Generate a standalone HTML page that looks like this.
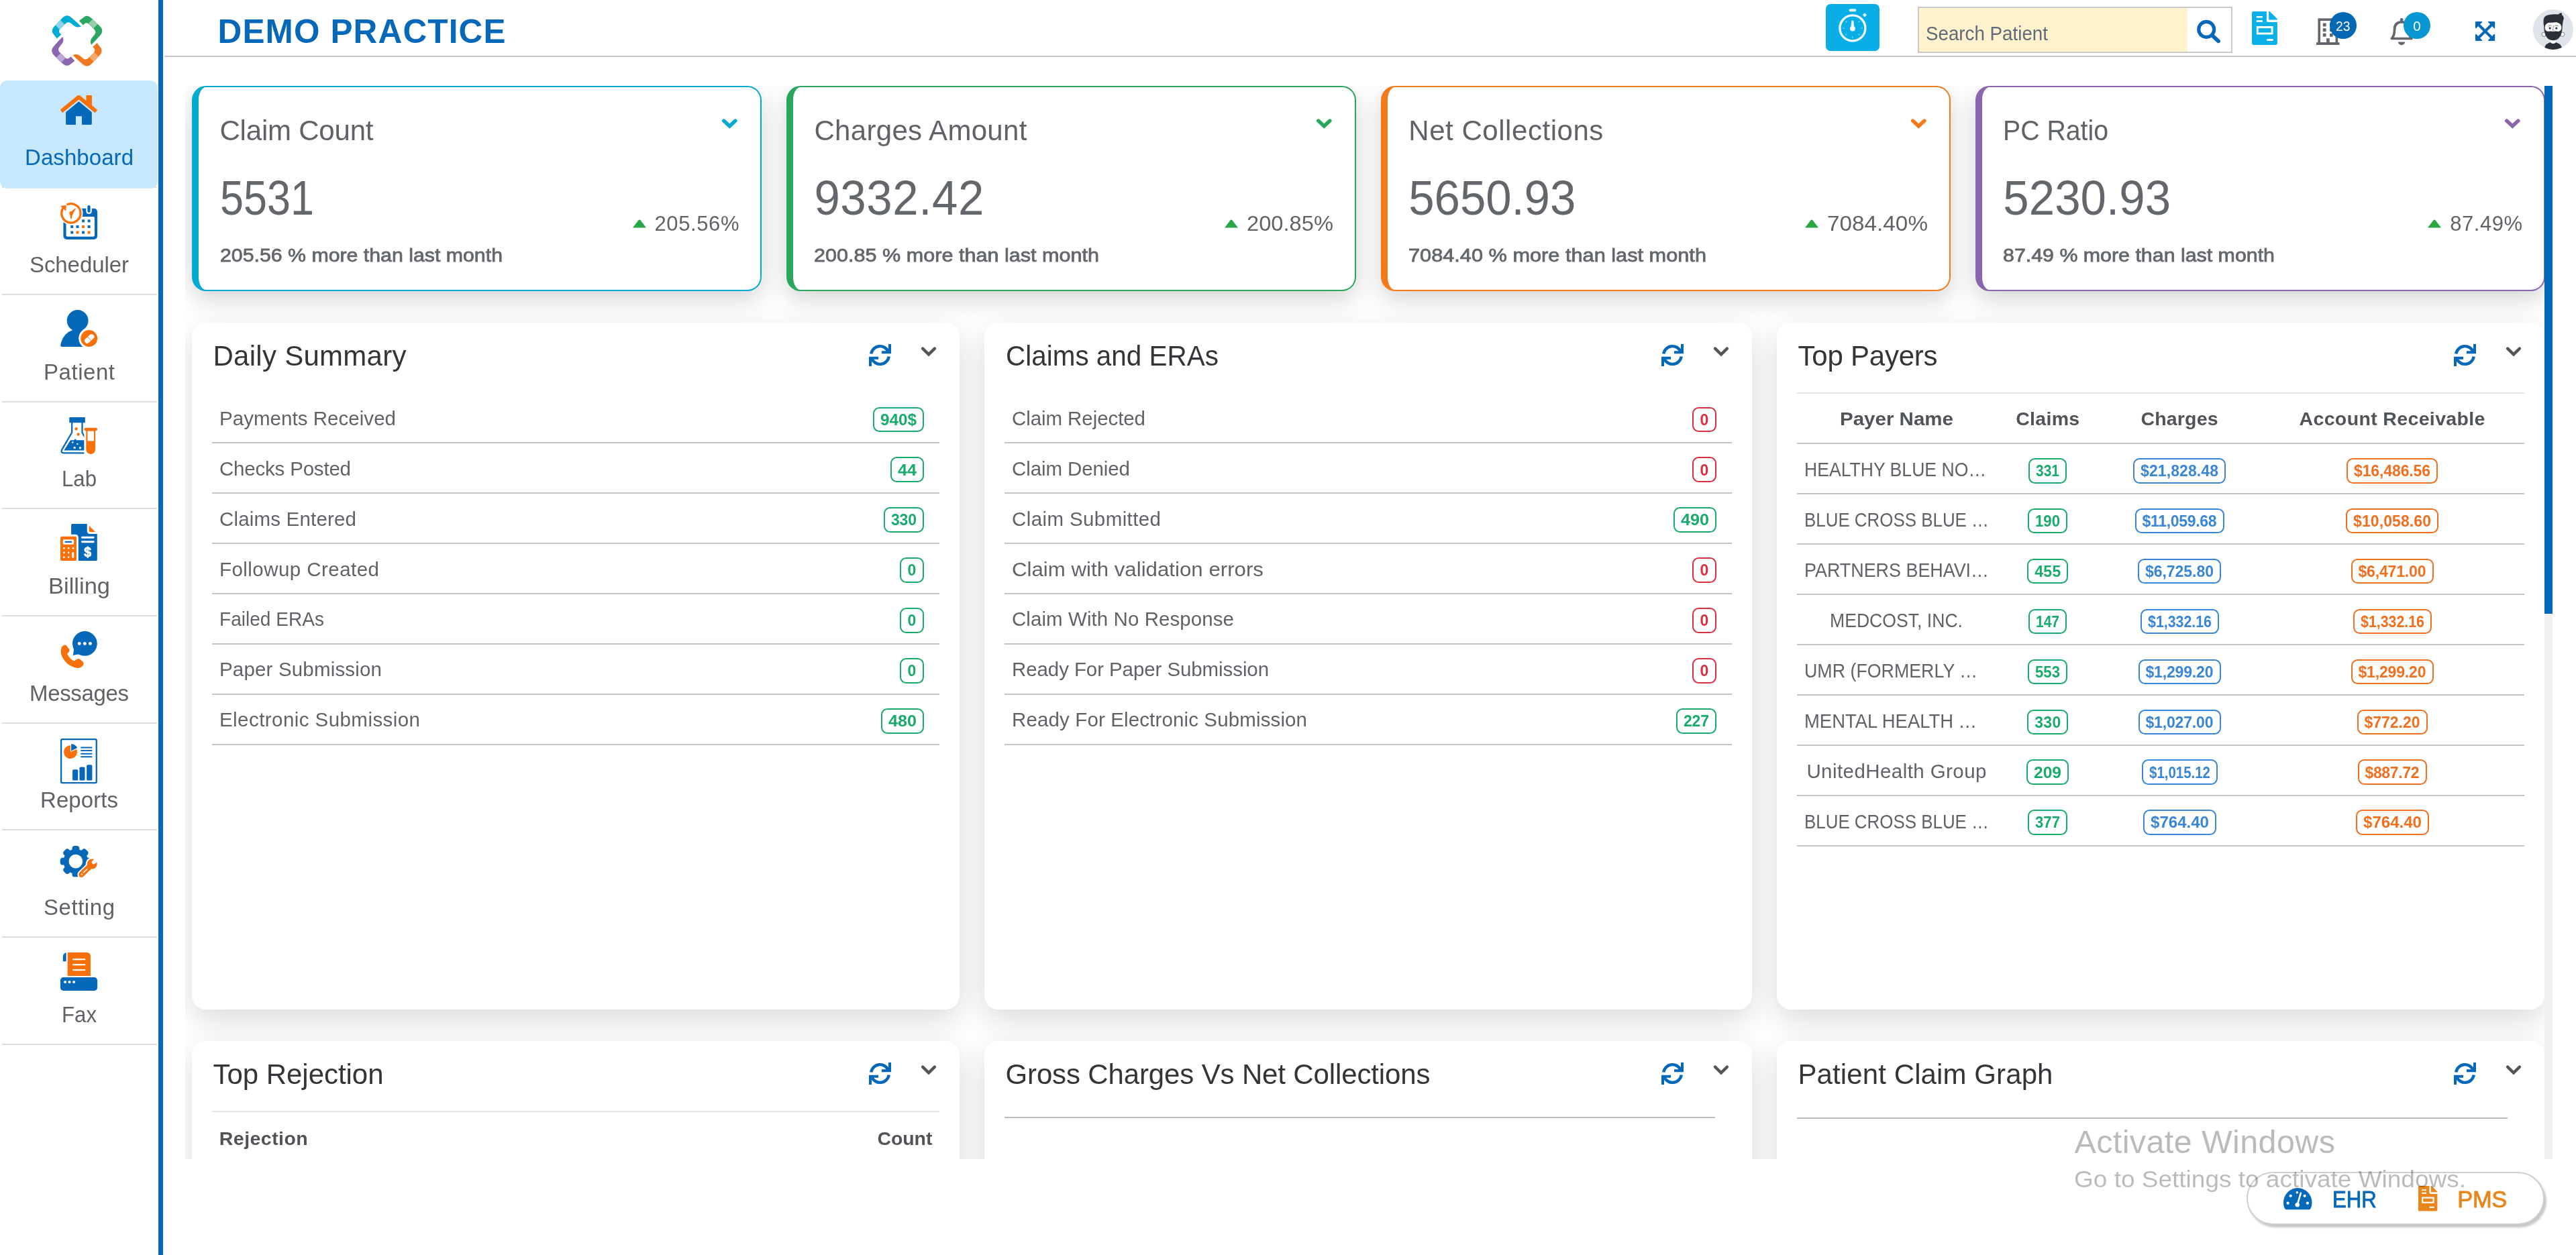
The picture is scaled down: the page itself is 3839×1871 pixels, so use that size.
<!DOCTYPE html>
<html lang="en"><head><meta charset="utf-8"><title>DEMO PRACTICE - Dashboard</title>
<style>
html,body{margin:0;padding:0;background:#fff;}
body{width:3839px;height:1871px;position:relative;overflow:hidden;font-family:"Liberation Sans",sans-serif;}
.t{position:absolute;white-space:nowrap;line-height:1;}
#root{position:absolute;left:0;top:0;width:3839px;height:1871px;will-change:transform;}
svg{display:block;width:100%;height:100%;overflow:visible}
</style></head><body><div id="root">
<div style="position:absolute;left:0.0px;top:0.0px;width:236.0px;height:1871.0px;background:#fff;"></div>
<div style="position:absolute;left:236.0px;top:0.0px;width:7.0px;height:1871.0px;background:#0568b8;"></div>
<div style="position:absolute;left:77px;top:22.5px;width:75.5px;height:75.5px"><svg viewBox="215 155 945 950"><g transform="rotate(0 687 631)"><path d="M312 590 L245 505 Q187 440 270 350 L400 215 Q490 111 585 195 L700 300 L765 362 Q690 395 630 350 L570 300 Q520 265 475 305 L370 410 Q335 450 365 487 L392 515 Z" fill="#00acd4"/><path d="M280 335 L373.5 241.5 L453.5 321.5 L360 415 Z" fill="#8fd3ea"/></g><g transform="rotate(90 687 631)"><path d="M312 590 L245 505 Q187 440 270 350 L400 215 Q490 111 585 195 L700 300 L765 362 Q690 395 630 350 L570 300 Q520 265 475 305 L370 410 Q335 450 365 487 L392 515 Z" fill="#2ba560"/><path d="M280 335 L373.5 241.5 L453.5 321.5 L360 415 Z" fill="#98cfa8"/></g><g transform="rotate(180 687 631)"><path d="M312 590 L245 505 Q187 440 270 350 L400 215 Q490 111 585 195 L700 300 L765 362 Q690 395 630 350 L570 300 Q520 265 475 305 L370 410 Q335 450 365 487 L392 515 Z" fill="#f07820"/><path d="M280 335 L373.5 241.5 L453.5 321.5 L360 415 Z" fill="#f8a868"/></g><g transform="rotate(270 687 631)"><path d="M312 590 L245 505 Q187 440 270 350 L400 215 Q490 111 585 195 L700 300 L765 362 Q690 395 630 350 L570 300 Q520 265 475 305 L370 410 Q335 450 365 487 L392 515 Z" fill="#8a65b0"/><path d="M280 335 L373.5 241.5 L453.5 321.5 L360 415 Z" fill="#bba8d4"/></g></svg></div>
<div style="position:absolute;left:3.0px;top:278.3px;width:231.0px;height:2.0px;background:#dcdcdc;"></div>
<div style="position:absolute;left:0.0px;top:120.0px;width:235.0px;height:161.0px;background:#c8e8fe;border-radius:11px;"></div>
<div style="position:absolute;left:90px;top:141.8px;width:55.2px;height:44.2px"><svg viewBox="215 212 990 793" preserveAspectRatio="none"><path d="M708 215 Q686 208 660 228 L222 590 Q208 605 222 622 L258 668 Q270 682 288 670 L708 327 L1128 672 Q1142 682 1154 668 L1198 622 Q1208 608 1195 597 L1058 482 L1058 232 Q1058 214 1040 214 L922 214 Q905 214 905 232 L905 357 L752 228 Q730 208 708 215 Z" fill="#f8700a"/><path d="M708 380 L1040 652 Q1055 665 1055 685 L1055 975 Q1055 1003 1027 1003 L790 1003 L790 772 L627 772 L627 1003 L388 1003 Q360 1003 360 975 L360 685 Q360 665 375 652 Z" fill="#0568b8"/></svg></div>
<div class="t" style="left:37.0px;top:218.4px;font-size:33px;color:#0568b8;letter-spacing:0.07px;">Dashboard</div>
<div style="position:absolute;left:3.0px;top:438.0px;width:231.0px;height:2.0px;background:#dcdcdc;"></div>
<div style="position:absolute;left:89.8px;top:302px;width:55.1px;height:54.9px"><svg viewBox="200 170 935 930" preserveAspectRatio="none"><path fill-rule="evenodd" fill="#0568b8" d="M370 320 H1040 Q1135 320 1135 415 V1005 Q1135 1100 1040 1100 H370 Q275 1100 275 1005 V415 Q275 320 370 320 Z M380 525 Q345 525 345 560 V995 Q345 1030 380 1030 H1030 Q1065 1030 1065 995 V560 Q1065 525 1030 525 Z"/><path d="M850 300 V380 Q850 455 922 455 Q995 455 995 380 V300 Z" fill="#fff"/><rect x="885" y="238" width="72" height="185" rx="36" fill="#0568b8"/><circle cx="470" cy="440" r="298" fill="#fff"/><rect x="745" y="600" width="66" height="68" fill="#0568b8"/><rect x="890" y="600" width="66" height="68" fill="#0568b8"/><rect x="460" y="745" width="66" height="68" fill="#0568b8"/><rect x="600" y="745" width="66" height="68" fill="#0568b8"/><rect x="745" y="745" width="66" height="68" fill="#f8700a"/><rect x="890" y="745" width="66" height="68" fill="#0568b8"/><rect x="460" y="890" width="66" height="68" fill="#0568b8"/><rect x="600" y="890" width="66" height="68" fill="#f8700a"/><rect x="745" y="890" width="66" height="68" fill="#0568b8"/><rect x="890" y="890" width="66" height="68" fill="#f8700a"/><path d="M361 226 A240 240 0 1 1 273.4 302.3" fill="none" stroke="#f8700a" stroke-width="56"/><path d="M200 256 L350 236 L340 384 Z" fill="#f8700a"/><circle cx="475" cy="440" r="48" fill="#f8700a"/><path d="M450 415 L575 315 L590 328 L505 470 Z M440 450 L505 460 L486 575 L458 575 Z" fill="#f8700a"/></svg></div>
<div class="t" style="left:44.0px;top:378.1px;font-size:33px;color:#5f6368;letter-spacing:-0.08px;">Scheduler</div>
<div style="position:absolute;left:3.0px;top:597.6px;width:231.0px;height:2.0px;background:#dcdcdc;"></div>
<div style="position:absolute;left:89.8px;top:462px;width:55.1px;height:54.9px"><svg viewBox="200 170 935 930" preserveAspectRatio="none"><circle cx="635" cy="440" r="270" fill="#0568b8"/><path d="M240 1100 Q195 1100 207 1040 Q270 760 520 675 L780 675 L900 1100 Z" fill="#0568b8"/><circle cx="925" cy="890" r="262" fill="#fff"/><circle cx="925" cy="890" r="212" fill="#f8700a"/><g transform="rotate(-42 935 897)"><rect x="795" y="832" width="280" height="130" rx="65" fill="#fff"/><rect x="930" y="832" width="10" height="130" fill="#f8700a"/></g></svg></div>
<div class="t" style="left:65.0px;top:537.8px;font-size:33px;color:#5f6368;letter-spacing:0.54px;">Patient</div>
<div style="position:absolute;left:3.0px;top:757.3px;width:231.0px;height:2.0px;background:#dcdcdc;"></div>
<div style="position:absolute;left:89.8px;top:622px;width:55.1px;height:54.9px"><svg viewBox="200 170 935 930" preserveAspectRatio="none"><rect x="425" y="172" width="400" height="138" rx="16" fill="#0568b8"/><path d="M492 300 V555 L238 990 Q200 1075 290 1076 H900" fill="none" stroke="#0568b8" stroke-width="38" stroke-linejoin="round"/><path d="M752 300 V560 L830 700" fill="none" stroke="#0568b8" stroke-width="38"/><path d="M455 750 H545 Q575 690 610 750 H810 V1010 H290 Z" fill="#0568b8"/><circle cx="510" cy="805" r="20" fill="#fff"/><circle cx="630" cy="845" r="20" fill="#fff"/><circle cx="560" cy="940" r="28" fill="#fff"/><circle cx="700" cy="945" r="28" fill="#fff"/><circle cx="600" cy="462" r="38" fill="#f8700a"/><circle cx="652" cy="603" r="38" fill="#f8700a"/><rect x="800" y="400" width="340" height="710" fill="#fff"/><rect x="800" y="435" width="335" height="76" rx="38" fill="#f8700a"/><path d="M850 500 H1085 V983 A117.5 117.5 0 0 1 850 983 Z" fill="#f8700a"/><rect x="888" y="520" width="160" height="250" fill="#fff"/></svg></div>
<div class="t" style="left:92.0px;top:697.4px;font-size:33px;color:#5f6368;transform:scaleX(0.9444);transform-origin:0 0;">Lab</div>
<div style="position:absolute;left:3.0px;top:917.0px;width:231.0px;height:2.0px;background:#dcdcdc;"></div>
<div style="position:absolute;left:90.1px;top:781px;width:54.8px;height:55px"><svg viewBox="205 152 930 933" preserveAspectRatio="none"><path d="M505 152 H880 V330 Q880 405 955 405 H1135 V1060 Q1135 1085 1110 1085 H660 V500 Q660 420 580 420 H478 V180 Q478 152 505 152 Z" fill="#0568b8"/><path d="M930 200 L1090 355 H960 Q930 355 930 325 Z" fill="#f8700a"/><rect x="730" y="470" width="335" height="50" rx="25" fill="#fff"/><rect x="730" y="580" width="335" height="50" rx="25" fill="#fff"/><text x="895" y="985" font-family="Liberation Sans, sans-serif" font-weight="700" font-size="330" text-anchor="middle" fill="#fff" stroke="#fff" stroke-width="14">$</text><rect x="205" y="470" width="407" height="615" rx="32" fill="#f8700a"/><rect x="270" y="545" width="275" height="130" rx="30" fill="#fff"/><rect x="320" y="590" width="175" height="36" fill="#0568b8"/><circle cx="297" cy="768" r="23" fill="#fff"/><circle cx="412" cy="768" r="23" fill="#fff"/><circle cx="527" cy="768" r="23" fill="#fff"/><circle cx="297" cy="880" r="23" fill="#fff"/><circle cx="412" cy="880" r="23" fill="#fff"/><circle cx="297" cy="995" r="23" fill="#fff"/><circle cx="412" cy="995" r="23" fill="#fff"/><rect x="497" y="865" width="52" height="150" rx="26" fill="#fff"/></svg></div>
<div class="t" style="left:72.0px;top:857.1px;font-size:33px;color:#5f6368;transform:scaleX(1.0449);transform-origin:0 0;">Billing</div>
<div style="position:absolute;left:3.0px;top:1076.6px;width:231.0px;height:2.0px;background:#dcdcdc;"></div>
<div style="position:absolute;left:90.1px;top:941px;width:54.8px;height:54.9px"><svg viewBox="205 170 930 930" preserveAspectRatio="none"><circle cx="822" cy="482" r="312" fill="#0568b8"/><path d="M550 620 L525 778 L700 745 Z" fill="#0568b8"/><circle cx="685" cy="482" r="42" fill="#fff"/><circle cx="822" cy="482" r="42" fill="#fff"/><circle cx="960" cy="482" r="42" fill="#fff"/><path d="M232 575 Q300 490 352 527 L432 632 Q452 670 415 702 L375 742 Q440 880 560 925 L622 878 Q660 852 700 880 L775 945 Q812 990 770 1042 Q720 1100 640 1100 Q430 1080 300 900 Q180 740 232 575 Z" fill="#f8700a"/></svg></div>
<div class="t" style="left:44.0px;top:1016.8px;font-size:33px;color:#5f6368;letter-spacing:-0.34px;">Messages</div>
<div style="position:absolute;left:3.0px;top:1236.3px;width:231.0px;height:2.0px;background:#dcdcdc;"></div>
<div style="position:absolute;left:90px;top:1100.7px;width:54.9px;height:67.3px"><svg viewBox="180 130 820 1005" preserveAspectRatio="none"><rect x="197" y="148" width="786" height="970" rx="24" fill="#fff" stroke="#0568b8" stroke-width="34"/><path d="M405 430 L405 282 A148 148 0 1 0 540 370 Z" fill="#f8700a"/><path d="M420 405 L420 255 A150 150 0 0 1 556 338 Z" fill="#0568b8"/><path d="M645 330 H875 M645 400 H875 M645 468 H875 M645 538 H875" stroke="#0568b8" stroke-width="30" stroke-linecap="round"/><rect x="450" y="820" width="122" height="245" rx="24" fill="#0568b8"/><rect x="605" y="765" width="121" height="300" rx="24" fill="#0568b8"/><rect x="765" y="718" width="123" height="347" rx="24" fill="#0568b8"/></svg></div>
<div class="t" style="left:60.0px;top:1176.4px;font-size:33px;color:#5f6368;letter-spacing:0.07px;">Reports</div>
<div style="position:absolute;left:3.0px;top:1396.0px;width:231.0px;height:2.0px;background:#dcdcdc;"></div>
<div style="position:absolute;left:90px;top:1260.9px;width:54.9px;height:48px"><svg viewBox="215 195 985 860" preserveAspectRatio="none"><circle cx="625" cy="610" r="330" fill="#0568b8"/><rect x="527.5" y="195" width="195" height="165" rx="70" fill="#0568b8" transform="rotate(0.0 625 610)"/><rect x="527.5" y="195" width="195" height="165" rx="70" fill="#0568b8" transform="rotate(45.0 625 610)"/><rect x="527.5" y="195" width="195" height="165" rx="70" fill="#0568b8" transform="rotate(90.0 625 610)"/><rect x="527.5" y="195" width="195" height="165" rx="70" fill="#0568b8" transform="rotate(135.0 625 610)"/><rect x="527.5" y="195" width="195" height="165" rx="70" fill="#0568b8" transform="rotate(180.0 625 610)"/><rect x="527.5" y="195" width="195" height="165" rx="70" fill="#0568b8" transform="rotate(225.0 625 610)"/><rect x="527.5" y="195" width="195" height="165" rx="70" fill="#0568b8" transform="rotate(270.0 625 610)"/><rect x="527.5" y="195" width="195" height="165" rx="70" fill="#0568b8" transform="rotate(315.0 625 610)"/><circle cx="625" cy="610" r="185" fill="#fff"/><path d="M778 962 L1030 715" stroke="#fff" stroke-width="215" stroke-linecap="round"/><circle cx="1062" cy="678" r="172" fill="#fff"/><path d="M778 962 L1030 715" stroke="#f8700a" stroke-width="150" stroke-linecap="round"/><circle cx="1062" cy="678" r="135" fill="#f8700a"/><rect x="1068" y="612" width="260" height="104" rx="52" fill="#fff" transform="rotate(-39 1068 664)"/><path d="M838 905 L925 818" stroke="#fff" stroke-width="30" stroke-linecap="round"/><circle cx="790" cy="955" r="21" fill="#fff"/></svg></div>
<div class="t" style="left:65.0px;top:1336.1px;font-size:33px;color:#5f6368;letter-spacing:0.54px;">Setting</div>
<div style="position:absolute;left:3.0px;top:1555.7px;width:231.0px;height:2.0px;background:#dcdcdc;"></div>
<div style="position:absolute;left:89.8px;top:1420px;width:55.1px;height:56.9px"><svg viewBox="195 165 910 940" preserveAspectRatio="none"><rect x="195" y="778" width="910" height="327" rx="72" fill="#0568b8"/><circle cx="312" cy="893" r="33" fill="#fff"/><circle cx="418" cy="893" r="33" fill="#fff"/><circle cx="527" cy="893" r="33" fill="#fff"/><path d="M372 165 H840 Q938 165 938 263 V742 H372 Z" fill="#f8700a"/><rect x="497" y="315" width="311" height="37" fill="#fff"/><rect x="497" y="447" width="311" height="37" fill="#fff"/><rect x="497" y="577" width="311" height="37" fill="#fff"/><path d="M338 168 Q260 185 258 270 V385 H338 Z" fill="#0568b8"/></svg></div>
<div class="t" style="left:92.0px;top:1495.8px;font-size:33px;color:#5f6368;transform:scaleX(0.9452);transform-origin:0 0;">Fax</div>
<div style="position:absolute;left:245.0px;top:83.0px;width:3594.0px;height:2.0px;background:#c6c6c6;"></div>
<div class="t" style="left:324.5px;top:22.3px;font-size:49.5px;color:#0568b8;font-weight:700;letter-spacing:1.14px;">DEMO PRACTICE</div>
<div style="position:absolute;left:2721.0px;top:6.0px;width:80.0px;height:70.2px;background:#0aaee6;border-radius:7px;"><svg viewBox="0 0 80 70"><circle cx="39.9" cy="35.8" r="19" fill="none" stroke="#fff" stroke-width="3.3" opacity=".95"/><rect x="34.8" y="7.2" width="10.4" height="4" rx="1.5" fill="#fff" opacity=".9"/><rect x="55.8" y="14" width="4.4" height="4.4" fill="#fff" opacity=".85" transform="rotate(45 58 16.2)"/><path d="M48.39 27.31 L50.51 25.19 M51.90 35.80 L54.90 35.80 M48.39 44.29 L50.51 46.41 M39.90 47.80 L39.90 50.80 M31.41 44.29 L29.29 46.41 M27.90 35.80 L24.90 35.80 M31.41 27.31 L29.29 25.19 " stroke="#fff" stroke-width="1.4" opacity=".45"/><circle cx="39.9" cy="36.5" r="3.9" fill="#fff"/><path d="M38.4 24.5 H41.4 L42.4 36 H37.4 Z" fill="#fff" opacity=".9"/></svg></div>
<div style="position:absolute;left:2858.0px;top:10.0px;width:469.0px;height:69.0px;box-sizing:border-box;border:2px solid #c9c9c9;background:#fff;"><div style="position:absolute;left:0.0px;top:0.0px;width:400.0px;height:65.0px;background:#fff2cc;"></div></div>
<div class="t" style="left:2869.5px;top:35.6px;font-size:29px;color:#5f6b7a;transform:scaleX(0.9567);transform-origin:0 0;">Search Patient</div>
<div style="position:absolute;left:3273.7px;top:28.7px;width:35.5px;height:35.9px"><svg viewBox="470 400 495 500" preserveAspectRatio="none"><circle cx="668" cy="607" r="160" fill="none" stroke="#0568b8" stroke-width="72"/><path d="M812 752 L918 850" stroke="#0568b8" stroke-width="80" stroke-linecap="round"/></svg></div>
<div style="position:absolute;left:3356.2px;top:17.1px;width:37.9px;height:50px"><svg viewBox="1620 238 528 697" preserveAspectRatio="none"><path d="M1650 238 H1925 V420 Q1925 460 1965 460 H2148 V905 Q2148 935 2118 935 H1650 Q1620 935 1620 905 V268 Q1620 238 1650 238 Z" fill="#0cb0e8"/><path d="M1970 238 H1990 L2148 395 V412 H1970 Z" fill="#0cb0e8"/><rect x="1715" y="335" width="127" height="36" fill="#fff"/><rect x="1715" y="420" width="127" height="38" fill="#fff"/><rect x="1715" y="545" width="345" height="173" rx="8" fill="#fff"/><rect x="1755" y="588" width="265" height="90" fill="#0cb0e8"/><rect x="1930" y="810" width="130" height="40" fill="#fff"/></svg></div>
<div style="position:absolute;left:3451.6px;top:26.9px;width:34.6px;height:39.9px"><svg viewBox="265 330 425 490" preserveAspectRatio="none"><rect x="317" y="357" width="321" height="440" fill="none" stroke="#63676c" stroke-width="45"/><rect x="265" y="775" width="425" height="45" fill="#63676c"/><rect x="385" y="423" width="60" height="60" rx="12" fill="#63676c"/><rect x="385" y="518" width="60" height="60" rx="12" fill="#63676c"/><rect x="385" y="610" width="60" height="60" rx="12" fill="#63676c"/><rect x="510" y="423" width="60" height="60" rx="12" fill="#63676c"/><rect x="510" y="518" width="60" height="60" rx="12" fill="#63676c"/><rect x="510" y="610" width="60" height="60" rx="12" fill="#63676c"/><rect x="450" y="700" width="58" height="90" fill="#63676c"/></svg></div>
<div style="position:absolute;left:3471.7px;top:17.9px;width:40.0px;height:40.0px;background:#0468b4;border-radius:50%;"></div>
<div class="t" style="left:3480.9px;top:29.0px;font-size:20.5px;color:#fff;transform:scaleX(0.9429);transform-origin:0 0;">23</div>
<div style="position:absolute;left:3562px;top:26.9px;width:33.9px;height:39.9px"><svg viewBox="1620 330 415 490" preserveAspectRatio="none"><path d="M1648 705 Q1700 650 1700 540 Q1700 410 1830 400 Q1960 410 1960 540 Q1960 650 2012 705 Z" fill="none" stroke="#63676c" stroke-width="45" stroke-linejoin="round"/><circle cx="1830" cy="360" r="29" fill="#63676c"/><path d="M1766 765 A62 58 0 0 0 1890 765 Z" fill="#63676c"/></svg></div>
<div style="position:absolute;left:3582.0px;top:17.9px;width:40.0px;height:40.0px;background:#0897d3;border-radius:50%;"></div>
<div class="t" style="left:3596.3px;top:29.0px;font-size:20.5px;color:#fff;">0</div>
<div style="position:absolute;left:3689px;top:31.9px;width:29.2px;height:29px"><svg viewBox="265 445 407 405" preserveAspectRatio="none"><path d="M335 515 L602 780 M602 515 L335 780" stroke="#0568b8" stroke-width="56"/><path d="M280 445 H400 Q414 452 404 464 L284 584 Q270 594 265 580 V460 Q265 445 280 445 Z" fill="#0568b8"/><path d="M657 445 H537 Q523 452 533 464 L653 584 Q667 594 672 580 V460 Q672 445 657 445 Z" fill="#0568b8"/><path d="M280 850 H400 Q414 843 404 831 L284 711 Q270 701 265 715 V835 Q265 850 280 850 Z" fill="#0568b8"/><path d="M657 850 H537 Q523 843 533 831 L653 711 Q667 701 672 715 V835 Q672 850 657 850 Z" fill="#0568b8"/></svg></div>
<div style="position:absolute;left:3775px;top:14px;width:59.9px;height:59.9px"><svg viewBox="1465 195 835 835"><defs><clipPath id="avc"><circle cx="1882.5" cy="612.5" r="417.5"/></clipPath></defs><circle cx="1882.5" cy="612.5" r="417.5" fill="#dfe3ea"/><g clip-path="url(#avc)"><path d="M1690 1060 Q1700 880 1880 872 Q2065 880 2080 1060 Z" fill="#2b3038"/><path d="M1828 790 H1938 V880 Q1883 935 1828 880 Z" fill="#fafafa"/><path d="M1835 800 H1930 V830 Q1883 850 1835 830 Z" fill="#f5a090"/><circle cx="1690" cy="715" r="44" fill="#fafafa" stroke="#2b3038" stroke-width="8"/><circle cx="2075" cy="715" r="44" fill="#fafafa" stroke="#2b3038" stroke-width="8"/><path d="M1690 520 Q1690 840 1882 840 Q2075 840 2075 520 Q2075 400 1882 400 Q1690 400 1690 520 Z" fill="#2b3038"/><path d="M1710 560 Q1720 455 1882 455 Q2050 455 2055 560 Q2060 640 1990 655 Q1930 640 1882 655 Q1830 640 1775 655 Q1705 640 1710 560 Z" fill="#fafafa"/><path d="M1690 540 Q1668 420 1698 362 Q1720 322 1770 314 Q1880 286 1990 298 Q2030 262 2058 272 Q2078 296 2062 318 Q2102 330 2092 352 Q2120 372 2100 398 Q2085 440 2075 540 Q2060 440 1960 455 Q1850 480 1720 460 Q1700 500 1690 540 Z" fill="#2b3038"/><circle cx="1815" cy="587" r="22" fill="#2b3038"/><circle cx="1950" cy="587" r="22" fill="#2b3038"/><path d="M1785 540 Q1815 510 1845 535 M1925 535 Q1955 510 1985 540" fill="none" stroke="#2b3038" stroke-width="9" stroke-linecap="round"/><path d="M1895 530 Q1885 590 1870 625 Q1880 640 1900 632" fill="none" stroke="#2b3038" stroke-width="7" stroke-linecap="round"/></g></svg></div>
<div style="position:absolute;left:276px;top:128px;width:3516px;height:1600.3px;background:#fff;overflow:hidden"><div style="position:absolute;left:10.0px;top:0.0px;width:849.0px;height:305.5px;border-radius:21px;box-shadow:0 12px 36px rgba(0,0,0,.175);"></div>
<div style="position:absolute;left:895.9px;top:0.0px;width:849.0px;height:305.5px;border-radius:21px;box-shadow:0 12px 36px rgba(0,0,0,.175);"></div>
<div style="position:absolute;left:1781.8px;top:0.0px;width:849.0px;height:305.5px;border-radius:21px;box-shadow:0 12px 36px rgba(0,0,0,.175);"></div>
<div style="position:absolute;left:2667.7px;top:0.0px;width:849.0px;height:305.5px;border-radius:21px;box-shadow:0 12px 36px rgba(0,0,0,.175);"></div>
<div style="position:absolute;left:10.0px;top:353.4px;width:1144.0px;height:1023.4px;border-radius:21px;box-shadow:0 15px 45px rgba(0,0,0,.15);"></div>
<div style="position:absolute;left:1191.0px;top:353.4px;width:1144.0px;height:1023.4px;border-radius:21px;box-shadow:0 15px 45px rgba(0,0,0,.15);"></div>
<div style="position:absolute;left:2372.0px;top:353.4px;width:1144.0px;height:1023.4px;border-radius:21px;box-shadow:0 15px 45px rgba(0,0,0,.15);"></div>
<div style="position:absolute;left:10.0px;top:1424.3px;width:1144.0px;height:400.0px;border-radius:21px;box-shadow:0 15px 45px rgba(0,0,0,.15);"></div>
<div style="position:absolute;left:1191.0px;top:1424.3px;width:1144.0px;height:400.0px;border-radius:21px;box-shadow:0 15px 45px rgba(0,0,0,.15);"></div>
<div style="position:absolute;left:2372.0px;top:1424.3px;width:1144.0px;height:400.0px;border-radius:21px;box-shadow:0 15px 45px rgba(0,0,0,.15);"></div>
<div style="position:absolute;left:10.0px;top:0.0px;width:849.0px;height:305.5px;box-sizing:border-box;background:#fff;border:2px solid #02a9d1;border-left:10.5px solid #02a9d1;border-radius:21px;"></div>
<div class="t" style="left:51.5px;top:45.9px;font-size:42px;color:#5f6368;letter-spacing:-0.21px;">Claim Count</div>
<div class="t" style="left:51.5px;top:133.9px;font-size:69px;color:#63676c;transform:scaleX(0.9120) scaleY(1.06);transform-origin:0 84.65%;">5531</div>
<div class="t" style="left:51.5px;top:239.1px;font-size:28px;color:#63676c;transform:scaleX(1.0819);transform-origin:0 0;-webkit-text-stroke:0.8px #63676c;">205.56 % more than last month</div>
<div class="t" style="left:699.5px;top:189.5px;font-size:31px;color:#5f6368;letter-spacing:0.60px;">205.56%</div>
<div style="position:absolute;left:666.5px;top:198.5px;width:20px;height:12.5px"><svg viewBox="0 0 20 12.5" width="20" height="12.5"><path d="M0 12.5 L8.6 1.2 Q10 -0.4 11.4 1.2 L20 12.5 Z" fill="#28a745"/></svg></div>
<div style="position:absolute;left:799.7px;top:48.80000000000001px;width:22.6px;height:14.4px"><svg viewBox="0 0 22.6 14.4" preserveAspectRatio="none"><path d="M2.7 3 L11.3 11 L19.9 3" fill="none" stroke="#02a9d1" stroke-width="5.4" stroke-linecap="round" stroke-linejoin="miter"/></svg></div>
<div style="position:absolute;left:895.9px;top:0.0px;width:849.0px;height:305.5px;box-sizing:border-box;background:#fff;border:2px solid #2ba65f;border-left:10.5px solid #2ba65f;border-radius:21px;"></div>
<div class="t" style="left:937.4px;top:45.9px;font-size:42px;color:#5f6368;letter-spacing:0.32px;">Charges Amount</div>
<div class="t" style="left:937.4px;top:133.9px;font-size:69px;color:#63676c;letter-spacing:0.60px;transform:scaleY(1.06);transform-origin:0 84.65%;">9332.42</div>
<div class="t" style="left:937.4px;top:239.1px;font-size:28px;color:#63676c;transform:scaleX(1.0922);transform-origin:0 0;-webkit-text-stroke:0.8px #63676c;">200.85 % more than last month</div>
<div class="t" style="left:1582.4px;top:189.5px;font-size:31px;color:#5f6368;transform:scaleX(1.0541);transform-origin:0 0;">200.85%</div>
<div style="position:absolute;left:1549.4px;top:198.5px;width:20px;height:12.5px"><svg viewBox="0 0 20 12.5" width="20" height="12.5"><path d="M0 12.5 L8.6 1.2 Q10 -0.4 11.4 1.2 L20 12.5 Z" fill="#28a745"/></svg></div>
<div style="position:absolute;left:1685.6px;top:48.80000000000001px;width:22.6px;height:14.4px"><svg viewBox="0 0 22.6 14.4" preserveAspectRatio="none"><path d="M2.7 3 L11.3 11 L19.9 3" fill="none" stroke="#2ba65f" stroke-width="5.4" stroke-linecap="round" stroke-linejoin="miter"/></svg></div>
<div style="position:absolute;left:1781.8px;top:0.0px;width:849.0px;height:305.5px;box-sizing:border-box;background:#fff;border:2px solid #f07a1c;border-left:10.5px solid #f07a1c;border-radius:21px;"></div>
<div class="t" style="left:1823.3px;top:45.9px;font-size:42px;color:#5f6368;letter-spacing:0.54px;">Net Collections</div>
<div class="t" style="left:1823.3px;top:133.9px;font-size:69px;color:#63676c;letter-spacing:-0.07px;transform:scaleY(1.06);transform-origin:0 84.65%;">5650.93</div>
<div class="t" style="left:1823.3px;top:239.1px;font-size:28px;color:#63676c;transform:scaleX(1.0971);transform-origin:0 0;-webkit-text-stroke:0.8px #63676c;">7084.40 % more than last month</div>
<div class="t" style="left:2447.3px;top:189.5px;font-size:31px;color:#5f6368;transform:scaleX(1.0743);transform-origin:0 0;">7084.40%</div>
<div style="position:absolute;left:2414.3px;top:198.5px;width:20px;height:12.5px"><svg viewBox="0 0 20 12.5" width="20" height="12.5"><path d="M0 12.5 L8.6 1.2 Q10 -0.4 11.4 1.2 L20 12.5 Z" fill="#28a745"/></svg></div>
<div style="position:absolute;left:2571.5px;top:48.80000000000001px;width:22.6px;height:14.4px"><svg viewBox="0 0 22.6 14.4" preserveAspectRatio="none"><path d="M2.7 3 L11.3 11 L19.9 3" fill="none" stroke="#f07a1c" stroke-width="5.4" stroke-linecap="round" stroke-linejoin="miter"/></svg></div>
<div style="position:absolute;left:2667.7px;top:0.0px;width:849.0px;height:305.5px;box-sizing:border-box;background:#fff;border:2px solid #8a66ae;border-left:10.5px solid #8a66ae;border-radius:21px;"></div>
<div class="t" style="left:2709.2px;top:45.9px;font-size:42px;color:#5f6368;transform:scaleX(0.9342);transform-origin:0 0;">PC Ratio</div>
<div class="t" style="left:2709.2px;top:133.9px;font-size:69px;color:#63676c;letter-spacing:0.10px;transform:scaleY(1.06);transform-origin:0 84.65%;">5230.93</div>
<div class="t" style="left:2709.2px;top:239.1px;font-size:28px;color:#63676c;transform:scaleX(1.0842);transform-origin:0 0;-webkit-text-stroke:0.8px #63676c;">87.49 % more than last month</div>
<div class="t" style="left:3375.2px;top:189.5px;font-size:31px;color:#5f6368;letter-spacing:0.57px;">87.49%</div>
<div style="position:absolute;left:3342.2px;top:198.5px;width:20px;height:12.5px"><svg viewBox="0 0 20 12.5" width="20" height="12.5"><path d="M0 12.5 L8.6 1.2 Q10 -0.4 11.4 1.2 L20 12.5 Z" fill="#28a745"/></svg></div>
<div style="position:absolute;left:3457.4px;top:48.80000000000001px;width:22.6px;height:14.4px"><svg viewBox="0 0 22.6 14.4" preserveAspectRatio="none"><path d="M2.7 3 L11.3 11 L19.9 3" fill="none" stroke="#8a66ae" stroke-width="5.4" stroke-linecap="round" stroke-linejoin="miter"/></svg></div>
<div style="position:absolute;left:10.0px;top:353.4px;width:1144.0px;height:1023.4px;background:#fff;border-radius:21px;"></div>
<div class="t" style="left:41.5px;top:382.3px;font-size:42px;color:#333539;letter-spacing:0.27px;">Daily Summary</div>
<div style="position:absolute;left:1019.1px;top:385.0px;width:33px;height:33px"><svg viewBox="270 322 592 593" preserveAspectRatio="none"><path d="M328.8 582.2 A240 240 0 0 1 788.5 528.6" fill="none" stroke="#0568b8" stroke-width="80"/><path d="M790 322 H862 V580 H610 V505 H740 L790 440 Z" fill="#0568b8"/><g transform="rotate(180 566 618.5)"><path d="M328.8 582.2 A240 240 0 0 1 788.5 528.6" fill="none" stroke="#0568b8" stroke-width="80"/><path d="M790 322 H862 V580 H610 V505 H740 L790 440 Z" fill="#0568b8"/></g></svg></div>
<div style="position:absolute;left:1096.9px;top:388.7px;width:22px;height:14.3px"><svg viewBox="0 0 22 14.3" preserveAspectRatio="none"><path d="M2.1 2.6 L11 11.4 L19.9 2.6" fill="none" stroke="#555555" stroke-width="4.4" stroke-linecap="round" stroke-linejoin="miter"/></svg></div>
<div style="position:absolute;left:40.0px;top:531.2px;width:1084.0px;height:2.0px;background:#c4c4c4;"></div>
<div class="t" style="left:51.0px;top:480.8px;font-size:29.5px;color:#5f6368;letter-spacing:0.04px;">Payments Received</div>
<div style="position:absolute;left:1025.0px;top:478.5px;width:76.0px;height:37.8px;box-sizing:border-box;border:2px solid #19ab6b;border-radius:9.5px;"></div>
<div class="t" style="left:1036.0px;top:486.6px;font-size:23px;color:#19ab6b;font-weight:700;transform:scaleX(1.0554);transform-origin:0 0;">940$</div>
<div style="position:absolute;left:40.0px;top:606.1px;width:1084.0px;height:2.0px;background:#c4c4c4;"></div>
<div class="t" style="left:51.0px;top:555.7px;font-size:29.5px;color:#5f6368;letter-spacing:-0.20px;">Checks Posted</div>
<div style="position:absolute;left:1051.0px;top:553.4px;width:50.0px;height:37.8px;box-sizing:border-box;border:2px solid #19ab6b;border-radius:9.5px;"></div>
<div class="t" style="left:1062.0px;top:561.5px;font-size:23px;color:#19ab6b;font-weight:700;transform:scaleX(1.0944);transform-origin:0 0;">44</div>
<div style="position:absolute;left:40.0px;top:681.0px;width:1084.0px;height:2.0px;background:#c4c4c4;"></div>
<div class="t" style="left:51.0px;top:630.6px;font-size:29.5px;color:#5f6368;letter-spacing:0.18px;">Claims Entered</div>
<div style="position:absolute;left:1041.0px;top:628.3px;width:60.0px;height:37.8px;box-sizing:border-box;border:2px solid #19ab6b;border-radius:9.5px;"></div>
<div class="t" style="left:1052.0px;top:636.4px;font-size:23px;color:#19ab6b;font-weight:700;letter-spacing:-0.19px;">330</div>
<div style="position:absolute;left:40.0px;top:755.9px;width:1084.0px;height:2.0px;background:#c4c4c4;"></div>
<div class="t" style="left:51.0px;top:705.5px;font-size:29.5px;color:#5f6368;letter-spacing:0.45px;">Followup Created</div>
<div style="position:absolute;left:1065.0px;top:703.2px;width:36.0px;height:37.8px;box-sizing:border-box;border:2px solid #19ab6b;border-radius:9.5px;"></div>
<div class="t" style="left:1076.6px;top:711.3px;font-size:23px;color:#19ab6b;font-weight:700;">0</div>
<div style="position:absolute;left:40.0px;top:830.8px;width:1084.0px;height:2.0px;background:#c4c4c4;"></div>
<div class="t" style="left:51.0px;top:780.4px;font-size:29.5px;color:#5f6368;transform:scaleX(0.9515);transform-origin:0 0;">Failed ERAs</div>
<div style="position:absolute;left:1065.0px;top:778.1px;width:36.0px;height:37.8px;box-sizing:border-box;border:2px solid #19ab6b;border-radius:9.5px;"></div>
<div class="t" style="left:1076.6px;top:786.2px;font-size:23px;color:#19ab6b;font-weight:700;">0</div>
<div style="position:absolute;left:40.0px;top:905.7px;width:1084.0px;height:2.0px;background:#c4c4c4;"></div>
<div class="t" style="left:51.0px;top:855.3px;font-size:29.5px;color:#5f6368;letter-spacing:0.17px;">Paper Submission</div>
<div style="position:absolute;left:1065.0px;top:853.0px;width:36.0px;height:37.8px;box-sizing:border-box;border:2px solid #19ab6b;border-radius:9.5px;"></div>
<div class="t" style="left:1076.6px;top:861.1px;font-size:23px;color:#19ab6b;font-weight:700;">0</div>
<div style="position:absolute;left:40.0px;top:980.6px;width:1084.0px;height:2.0px;background:#c4c4c4;"></div>
<div class="t" style="left:51.0px;top:930.2px;font-size:29.5px;color:#5f6368;letter-spacing:0.44px;">Electronic Submission</div>
<div style="position:absolute;left:1037.0px;top:927.9px;width:64.0px;height:37.8px;box-sizing:border-box;border:2px solid #19ab6b;border-radius:9.5px;"></div>
<div class="t" style="left:1048.0px;top:936.0px;font-size:23px;color:#19ab6b;font-weight:700;transform:scaleX(1.0944);transform-origin:0 0;">480</div>
<div style="position:absolute;left:1191.0px;top:353.4px;width:1144.0px;height:1023.4px;background:#fff;border-radius:21px;"></div>
<div class="t" style="left:1222.5px;top:382.3px;font-size:42px;color:#333539;transform:scaleX(0.9632);transform-origin:0 0;">Claims and ERAs</div>
<div style="position:absolute;left:2200.1px;top:385.0px;width:33px;height:33px"><svg viewBox="270 322 592 593" preserveAspectRatio="none"><path d="M328.8 582.2 A240 240 0 0 1 788.5 528.6" fill="none" stroke="#0568b8" stroke-width="80"/><path d="M790 322 H862 V580 H610 V505 H740 L790 440 Z" fill="#0568b8"/><g transform="rotate(180 566 618.5)"><path d="M328.8 582.2 A240 240 0 0 1 788.5 528.6" fill="none" stroke="#0568b8" stroke-width="80"/><path d="M790 322 H862 V580 H610 V505 H740 L790 440 Z" fill="#0568b8"/></g></svg></div>
<div style="position:absolute;left:2277.9px;top:388.7px;width:22px;height:14.3px"><svg viewBox="0 0 22 14.3" preserveAspectRatio="none"><path d="M2.1 2.6 L11 11.4 L19.9 2.6" fill="none" stroke="#555555" stroke-width="4.4" stroke-linecap="round" stroke-linejoin="miter"/></svg></div>
<div style="position:absolute;left:1221.0px;top:531.2px;width:1084.0px;height:2.0px;background:#c4c4c4;"></div>
<div class="t" style="left:1232.0px;top:480.8px;font-size:29.5px;color:#5f6368;letter-spacing:-0.08px;">Claim Rejected</div>
<div style="position:absolute;left:2246.0px;top:478.5px;width:36.0px;height:37.8px;box-sizing:border-box;border:2px solid #d9303f;border-radius:9.5px;"></div>
<div class="t" style="left:2257.6px;top:486.6px;font-size:23px;color:#d9303f;font-weight:700;">0</div>
<div style="position:absolute;left:1221.0px;top:606.1px;width:1084.0px;height:2.0px;background:#c4c4c4;"></div>
<div class="t" style="left:1232.0px;top:555.7px;font-size:29.5px;color:#5f6368;letter-spacing:-0.10px;">Claim Denied</div>
<div style="position:absolute;left:2246.0px;top:553.4px;width:36.0px;height:37.8px;box-sizing:border-box;border:2px solid #d9303f;border-radius:9.5px;"></div>
<div class="t" style="left:2257.6px;top:561.5px;font-size:23px;color:#d9303f;font-weight:700;">0</div>
<div style="position:absolute;left:1221.0px;top:681.0px;width:1084.0px;height:2.0px;background:#c4c4c4;"></div>
<div class="t" style="left:1232.0px;top:630.6px;font-size:29.5px;color:#5f6368;letter-spacing:0.40px;">Claim Submitted</div>
<div style="position:absolute;left:2218.0px;top:628.3px;width:64.0px;height:37.8px;box-sizing:border-box;border:2px solid #19ab6b;border-radius:9.5px;"></div>
<div class="t" style="left:2229.0px;top:636.4px;font-size:23px;color:#19ab6b;font-weight:700;transform:scaleX(1.0944);transform-origin:0 0;">490</div>
<div style="position:absolute;left:1221.0px;top:755.9px;width:1084.0px;height:2.0px;background:#c4c4c4;"></div>
<div class="t" style="left:1232.0px;top:705.5px;font-size:29.5px;color:#5f6368;transform:scaleX(1.0589);transform-origin:0 0;">Claim with validation errors</div>
<div style="position:absolute;left:2246.0px;top:703.2px;width:36.0px;height:37.8px;box-sizing:border-box;border:2px solid #d9303f;border-radius:9.5px;"></div>
<div class="t" style="left:2257.6px;top:711.3px;font-size:23px;color:#d9303f;font-weight:700;">0</div>
<div style="position:absolute;left:1221.0px;top:830.8px;width:1084.0px;height:2.0px;background:#c4c4c4;"></div>
<div class="t" style="left:1232.0px;top:780.4px;font-size:29.5px;color:#5f6368;letter-spacing:0.07px;">Claim With No Response</div>
<div style="position:absolute;left:2246.0px;top:778.1px;width:36.0px;height:37.8px;box-sizing:border-box;border:2px solid #d9303f;border-radius:9.5px;"></div>
<div class="t" style="left:2257.6px;top:786.2px;font-size:23px;color:#d9303f;font-weight:700;">0</div>
<div style="position:absolute;left:1221.0px;top:905.7px;width:1084.0px;height:2.0px;background:#c4c4c4;"></div>
<div class="t" style="left:1232.0px;top:855.3px;font-size:29.5px;color:#5f6368;letter-spacing:-0.09px;">Ready For Paper Submission</div>
<div style="position:absolute;left:2246.0px;top:853.0px;width:36.0px;height:37.8px;box-sizing:border-box;border:2px solid #d9303f;border-radius:9.5px;"></div>
<div class="t" style="left:2257.6px;top:861.1px;font-size:23px;color:#d9303f;font-weight:700;">0</div>
<div style="position:absolute;left:1221.0px;top:980.6px;width:1084.0px;height:2.0px;background:#c4c4c4;"></div>
<div class="t" style="left:1232.0px;top:930.2px;font-size:29.5px;color:#5f6368;letter-spacing:0.13px;">Ready For Electronic Submission</div>
<div style="position:absolute;left:2222.0px;top:927.9px;width:60.0px;height:37.8px;box-sizing:border-box;border:2px solid #19ab6b;border-radius:9.5px;"></div>
<div class="t" style="left:2233.0px;top:936.0px;font-size:23px;color:#19ab6b;font-weight:700;letter-spacing:-0.19px;">227</div>
<div style="position:absolute;left:2372.0px;top:353.4px;width:1144.0px;height:1023.4px;background:#fff;border-radius:21px;"></div>
<div class="t" style="left:2403.5px;top:382.3px;font-size:42px;color:#333539;letter-spacing:-0.23px;">Top Payers</div>
<div style="position:absolute;left:3381.1px;top:385.0px;width:33px;height:33px"><svg viewBox="270 322 592 593" preserveAspectRatio="none"><path d="M328.8 582.2 A240 240 0 0 1 788.5 528.6" fill="none" stroke="#0568b8" stroke-width="80"/><path d="M790 322 H862 V580 H610 V505 H740 L790 440 Z" fill="#0568b8"/><g transform="rotate(180 566 618.5)"><path d="M328.8 582.2 A240 240 0 0 1 788.5 528.6" fill="none" stroke="#0568b8" stroke-width="80"/><path d="M790 322 H862 V580 H610 V505 H740 L790 440 Z" fill="#0568b8"/></g></svg></div>
<div style="position:absolute;left:3458.9px;top:388.7px;width:22px;height:14.3px"><svg viewBox="0 0 22 14.3" preserveAspectRatio="none"><path d="M2.1 2.6 L11 11.4 L19.9 2.6" fill="none" stroke="#555555" stroke-width="4.4" stroke-linecap="round" stroke-linejoin="miter"/></svg></div>
<div style="position:absolute;left:2402.0px;top:457.0px;width:1084.0px;height:2.0px;background:#e6e6e6;"></div>
<div style="position:absolute;left:2402.0px;top:532.2px;width:1084.0px;height:2.0px;background:#c4c4c4;"></div>
<div class="t" style="left:2465.9px;top:482.4px;font-size:28.5px;color:#505357;font-weight:700;transform:scaleX(1.0356);transform-origin:0 0;">Payer Name</div>
<div class="t" style="left:2728.2px;top:482.4px;font-size:28.5px;color:#505357;font-weight:700;letter-spacing:0.31px;">Claims</div>
<div class="t" style="left:2914.5px;top:482.4px;font-size:28.5px;color:#505357;font-weight:700;letter-spacing:0.16px;">Charges</div>
<div class="t" style="left:3150.5px;top:482.4px;font-size:28.5px;color:#505357;font-weight:700;letter-spacing:0.36px;">Account Receivable</div>
<div style="position:absolute;left:2402.0px;top:607.0px;width:1084.0px;height:2.0px;background:#c4c4c4;"></div>
<div class="t" style="left:2412.7px;top:557.0px;font-size:29.5px;color:#5f6368;transform:scaleX(0.9017);transform-origin:0 0;">HEALTHY BLUE NO…</div>
<div style="position:absolute;left:2747.2px;top:554.8px;width:57.0px;height:37.8px;box-sizing:border-box;border:2px solid #19ab6b;border-radius:9.5px;"></div>
<div class="t" style="left:2758.2px;top:562.9px;font-size:23px;color:#19ab6b;font-weight:700;transform:scaleX(0.9120);transform-origin:0 0;">331</div>
<div style="position:absolute;left:2903.0px;top:554.8px;width:138.0px;height:37.8px;box-sizing:border-box;border:2px solid #3a86d6;border-radius:9.5px;"></div>
<div class="t" style="left:2914.0px;top:562.9px;font-size:23px;color:#3a86d6;font-weight:700;letter-spacing:0.10px;">$21,828.48</div>
<div style="position:absolute;left:3221.0px;top:554.8px;width:136.0px;height:37.8px;box-sizing:border-box;border:2px solid #f07020;border-radius:9.5px;"></div>
<div class="t" style="left:3232.0px;top:562.9px;font-size:23px;color:#f07020;font-weight:700;letter-spacing:-0.12px;">$16,486.56</div>
<div style="position:absolute;left:2402.0px;top:681.9px;width:1084.0px;height:2.0px;background:#c4c4c4;"></div>
<div class="t" style="left:2412.7px;top:632.0px;font-size:29.5px;color:#5f6368;transform:scaleX(0.8782);transform-origin:0 0;">BLUE CROSS BLUE …</div>
<div style="position:absolute;left:2746.2px;top:629.7px;width:59.0px;height:37.8px;box-sizing:border-box;border:2px solid #19ab6b;border-radius:9.5px;"></div>
<div class="t" style="left:2757.2px;top:637.8px;font-size:23px;color:#19ab6b;font-weight:700;transform:scaleX(0.9641);transform-origin:0 0;">190</div>
<div style="position:absolute;left:2905.5px;top:629.7px;width:133.0px;height:37.8px;box-sizing:border-box;border:2px solid #3a86d6;border-radius:9.5px;"></div>
<div class="t" style="left:2916.5px;top:637.8px;font-size:23px;color:#3a86d6;font-weight:700;letter-spacing:-0.32px;">$11,059.68</div>
<div style="position:absolute;left:3220.0px;top:629.7px;width:138.0px;height:37.8px;box-sizing:border-box;border:2px solid #f07020;border-radius:9.5px;"></div>
<div class="t" style="left:3231.0px;top:637.8px;font-size:23px;color:#f07020;font-weight:700;letter-spacing:0.10px;">$10,058.60</div>
<div style="position:absolute;left:2402.0px;top:756.9px;width:1084.0px;height:2.0px;background:#c4c4c4;"></div>
<div class="t" style="left:2412.7px;top:706.9px;font-size:29.5px;color:#5f6368;transform:scaleX(0.9117);transform-origin:0 0;">PARTNERS BEHAVI…</div>
<div style="position:absolute;left:2745.2px;top:704.7px;width:61.0px;height:37.8px;box-sizing:border-box;border:2px solid #19ab6b;border-radius:9.5px;"></div>
<div class="t" style="left:2756.2px;top:712.7px;font-size:23px;color:#19ab6b;font-weight:700;letter-spacing:0.31px;">455</div>
<div style="position:absolute;left:2910.0px;top:704.7px;width:124.0px;height:37.8px;box-sizing:border-box;border:2px solid #3a86d6;border-radius:9.5px;"></div>
<div class="t" style="left:2921.0px;top:712.7px;font-size:23px;color:#3a86d6;font-weight:700;letter-spacing:-0.04px;">$6,725.80</div>
<div style="position:absolute;left:3227.5px;top:704.7px;width:123.0px;height:37.8px;box-sizing:border-box;border:2px solid #f07020;border-radius:9.5px;"></div>
<div class="t" style="left:3238.5px;top:712.7px;font-size:23px;color:#f07020;font-weight:700;letter-spacing:-0.17px;">$6,471.00</div>
<div style="position:absolute;left:2402.0px;top:831.8px;width:1084.0px;height:2.0px;background:#c4c4c4;"></div>
<div class="t" style="left:2451.4px;top:781.8px;font-size:29.5px;color:#5f6368;transform:scaleX(0.9015);transform-origin:0 0;">MEDCOST, INC.</div>
<div style="position:absolute;left:2747.2px;top:779.6px;width:57.0px;height:37.8px;box-sizing:border-box;border:2px solid #19ab6b;border-radius:9.5px;"></div>
<div class="t" style="left:2758.2px;top:787.7px;font-size:23px;color:#19ab6b;font-weight:700;transform:scaleX(0.9120);transform-origin:0 0;">147</div>
<div style="position:absolute;left:2913.5px;top:779.6px;width:117.0px;height:37.8px;box-sizing:border-box;border:2px solid #3a86d6;border-radius:9.5px;"></div>
<div class="t" style="left:2924.5px;top:787.7px;font-size:23px;color:#3a86d6;font-weight:700;transform:scaleX(0.9284);transform-origin:0 0;">$1,332.16</div>
<div style="position:absolute;left:3230.5px;top:779.6px;width:117.0px;height:37.8px;box-sizing:border-box;border:2px solid #f07020;border-radius:9.5px;"></div>
<div class="t" style="left:3241.5px;top:787.7px;font-size:23px;color:#f07020;font-weight:700;transform:scaleX(0.9284);transform-origin:0 0;">$1,332.16</div>
<div style="position:absolute;left:2402.0px;top:906.7px;width:1084.0px;height:2.0px;background:#c4c4c4;"></div>
<div class="t" style="left:2412.7px;top:856.8px;font-size:29.5px;color:#5f6368;transform:scaleX(0.9082);transform-origin:0 0;">UMR (FORMERLY …</div>
<div style="position:absolute;left:2746.2px;top:854.5px;width:59.0px;height:37.8px;box-sizing:border-box;border:2px solid #19ab6b;border-radius:9.5px;"></div>
<div class="t" style="left:2757.2px;top:862.6px;font-size:23px;color:#19ab6b;font-weight:700;transform:scaleX(0.9641);transform-origin:0 0;">553</div>
<div style="position:absolute;left:2910.5px;top:854.5px;width:123.0px;height:37.8px;box-sizing:border-box;border:2px solid #3a86d6;border-radius:9.5px;"></div>
<div class="t" style="left:2921.5px;top:862.6px;font-size:23px;color:#3a86d6;font-weight:700;letter-spacing:-0.17px;">$1,299.20</div>
<div style="position:absolute;left:3227.5px;top:854.5px;width:123.0px;height:37.8px;box-sizing:border-box;border:2px solid #f07020;border-radius:9.5px;"></div>
<div class="t" style="left:3238.5px;top:862.6px;font-size:23px;color:#f07020;font-weight:700;letter-spacing:-0.17px;">$1,299.20</div>
<div style="position:absolute;left:2402.0px;top:981.7px;width:1084.0px;height:2.0px;background:#c4c4c4;"></div>
<div class="t" style="left:2412.7px;top:931.7px;font-size:29.5px;color:#5f6368;transform:scaleX(0.9296);transform-origin:0 0;">MENTAL HEALTH …</div>
<div style="position:absolute;left:2745.2px;top:929.5px;width:61.0px;height:37.8px;box-sizing:border-box;border:2px solid #19ab6b;border-radius:9.5px;"></div>
<div class="t" style="left:2756.2px;top:937.5px;font-size:23px;color:#19ab6b;font-weight:700;letter-spacing:0.31px;">330</div>
<div style="position:absolute;left:2910.5px;top:929.5px;width:123.0px;height:37.8px;box-sizing:border-box;border:2px solid #3a86d6;border-radius:9.5px;"></div>
<div class="t" style="left:2921.5px;top:937.5px;font-size:23px;color:#3a86d6;font-weight:700;letter-spacing:-0.17px;">$1,027.00</div>
<div style="position:absolute;left:3236.5px;top:929.5px;width:105.0px;height:37.8px;box-sizing:border-box;border:2px solid #f07020;border-radius:9.5px;"></div>
<div class="t" style="left:3247.5px;top:937.5px;font-size:23px;color:#f07020;font-weight:700;letter-spacing:-0.02px;">$772.20</div>
<div style="position:absolute;left:2402.0px;top:1056.6px;width:1084.0px;height:2.0px;background:#c4c4c4;"></div>
<div class="t" style="left:2416.4px;top:1006.6px;font-size:29.5px;color:#5f6368;letter-spacing:0.43px;">UnitedHealth Group</div>
<div style="position:absolute;left:2744.2px;top:1004.4px;width:63.0px;height:37.8px;box-sizing:border-box;border:2px solid #19ab6b;border-radius:9.5px;"></div>
<div class="t" style="left:2755.2px;top:1012.5px;font-size:23px;color:#19ab6b;font-weight:700;transform:scaleX(1.0684);transform-origin:0 0;">209</div>
<div style="position:absolute;left:2915.5px;top:1004.4px;width:113.0px;height:37.8px;box-sizing:border-box;border:2px solid #3a86d6;border-radius:9.5px;"></div>
<div class="t" style="left:2926.5px;top:1012.5px;font-size:23px;color:#3a86d6;font-weight:700;transform:scaleX(0.8893);transform-origin:0 0;">$1,015.12</div>
<div style="position:absolute;left:3237.5px;top:1004.4px;width:103.0px;height:37.8px;box-sizing:border-box;border:2px solid #f07020;border-radius:9.5px;"></div>
<div class="t" style="left:3248.5px;top:1012.5px;font-size:23px;color:#f07020;font-weight:700;letter-spacing:-0.36px;">$887.72</div>
<div style="position:absolute;left:2402.0px;top:1131.5px;width:1084.0px;height:2.0px;background:#c4c4c4;"></div>
<div class="t" style="left:2412.7px;top:1081.5px;font-size:29.5px;color:#5f6368;transform:scaleX(0.8782);transform-origin:0 0;">BLUE CROSS BLUE …</div>
<div style="position:absolute;left:2746.2px;top:1079.3px;width:59.0px;height:37.8px;box-sizing:border-box;border:2px solid #19ab6b;border-radius:9.5px;"></div>
<div class="t" style="left:2757.2px;top:1087.4px;font-size:23px;color:#19ab6b;font-weight:700;transform:scaleX(0.9641);transform-origin:0 0;">377</div>
<div style="position:absolute;left:2917.5px;top:1079.3px;width:109.0px;height:37.8px;box-sizing:border-box;border:2px solid #3a86d6;border-radius:9.5px;"></div>
<div class="t" style="left:2928.5px;top:1087.4px;font-size:23px;color:#3a86d6;font-weight:700;transform:scaleX(1.0464);transform-origin:0 0;">$764.40</div>
<div style="position:absolute;left:3234.5px;top:1079.3px;width:109.0px;height:37.8px;box-sizing:border-box;border:2px solid #f07020;border-radius:9.5px;"></div>
<div class="t" style="left:3245.5px;top:1087.4px;font-size:23px;color:#f07020;font-weight:700;transform:scaleX(1.0464);transform-origin:0 0;">$764.40</div>
<div style="position:absolute;left:10.0px;top:1424.3px;width:1144.0px;height:400.0px;background:#fff;border-radius:21px;"></div>
<div class="t" style="left:41.5px;top:1453.2px;font-size:42px;color:#333539;letter-spacing:-0.04px;">Top Rejection</div>
<div style="position:absolute;left:1019.1px;top:1455.9px;width:33px;height:33px"><svg viewBox="270 322 592 593" preserveAspectRatio="none"><path d="M328.8 582.2 A240 240 0 0 1 788.5 528.6" fill="none" stroke="#0568b8" stroke-width="80"/><path d="M790 322 H862 V580 H610 V505 H740 L790 440 Z" fill="#0568b8"/><g transform="rotate(180 566 618.5)"><path d="M328.8 582.2 A240 240 0 0 1 788.5 528.6" fill="none" stroke="#0568b8" stroke-width="80"/><path d="M790 322 H862 V580 H610 V505 H740 L790 440 Z" fill="#0568b8"/></g></svg></div>
<div style="position:absolute;left:1096.9px;top:1459.6px;width:22px;height:14.3px"><svg viewBox="0 0 22 14.3" preserveAspectRatio="none"><path d="M2.1 2.6 L11 11.4 L19.9 2.6" fill="none" stroke="#555555" stroke-width="4.4" stroke-linecap="round" stroke-linejoin="miter"/></svg></div>
<div style="position:absolute;left:39.6px;top:1528.0px;width:1084.0px;height:2.0px;background:#e6e6e6;"></div>
<div class="t" style="left:50.8px;top:1555.2px;font-size:28.5px;color:#505357;font-weight:700;letter-spacing:0.46px;">Rejection</div>
<div class="t" style="left:1031.4px;top:1555.2px;font-size:28.5px;color:#505357;font-weight:700;letter-spacing:-0.08px;">Count</div>
<div style="position:absolute;left:1191.0px;top:1424.3px;width:1144.0px;height:400.0px;background:#fff;border-radius:21px;"></div>
<div class="t" style="left:1222.5px;top:1453.2px;font-size:42px;color:#333539;letter-spacing:-0.14px;">Gross Charges Vs Net Collections</div>
<div style="position:absolute;left:2200.1px;top:1455.9px;width:33px;height:33px"><svg viewBox="270 322 592 593" preserveAspectRatio="none"><path d="M328.8 582.2 A240 240 0 0 1 788.5 528.6" fill="none" stroke="#0568b8" stroke-width="80"/><path d="M790 322 H862 V580 H610 V505 H740 L790 440 Z" fill="#0568b8"/><g transform="rotate(180 566 618.5)"><path d="M328.8 582.2 A240 240 0 0 1 788.5 528.6" fill="none" stroke="#0568b8" stroke-width="80"/><path d="M790 322 H862 V580 H610 V505 H740 L790 440 Z" fill="#0568b8"/></g></svg></div>
<div style="position:absolute;left:2277.9px;top:1459.6px;width:22px;height:14.3px"><svg viewBox="0 0 22 14.3" preserveAspectRatio="none"><path d="M2.1 2.6 L11 11.4 L19.9 2.6" fill="none" stroke="#555555" stroke-width="4.4" stroke-linecap="round" stroke-linejoin="miter"/></svg></div>
<div style="position:absolute;left:1220.6px;top:1537.3px;width:1059.4px;height:2.0px;background:#bdbdbd;"></div>
<div style="position:absolute;left:2372.0px;top:1424.3px;width:1144.0px;height:400.0px;background:#fff;border-radius:21px;"></div>
<div class="t" style="left:2403.5px;top:1453.2px;font-size:42px;color:#333539;letter-spacing:0.10px;">Patient Claim Graph</div>
<div style="position:absolute;left:3381.1px;top:1455.9px;width:33px;height:33px"><svg viewBox="270 322 592 593" preserveAspectRatio="none"><path d="M328.8 582.2 A240 240 0 0 1 788.5 528.6" fill="none" stroke="#0568b8" stroke-width="80"/><path d="M790 322 H862 V580 H610 V505 H740 L790 440 Z" fill="#0568b8"/><g transform="rotate(180 566 618.5)"><path d="M328.8 582.2 A240 240 0 0 1 788.5 528.6" fill="none" stroke="#0568b8" stroke-width="80"/><path d="M790 322 H862 V580 H610 V505 H740 L790 440 Z" fill="#0568b8"/></g></svg></div>
<div style="position:absolute;left:3458.9px;top:1459.6px;width:22px;height:14.3px"><svg viewBox="0 0 22 14.3" preserveAspectRatio="none"><path d="M2.1 2.6 L11 11.4 L19.9 2.6" fill="none" stroke="#555555" stroke-width="4.4" stroke-linecap="round" stroke-linejoin="miter"/></svg></div>
<div style="position:absolute;left:2402.0px;top:1537.6px;width:1058.5px;height:2.0px;background:#bdbdbd;"></div></div>
<div style="position:absolute;left:3792.0px;top:128.0px;width:12.3px;height:1600.3px;background:#f1f1f1;"></div>
<div style="position:absolute;left:3792.0px;top:128.0px;width:12.3px;height:787.0px;background:#0568b8;"></div>
<div style="position:absolute;left:3348.0px;top:1747.2px;width:443.8px;height:79.2px;box-sizing:border-box;border:2px solid #cfcfcf;border-radius:40px;background:#fff;box-shadow:3px 4px 3px rgba(0,0,0,.22);"></div>
<div style="position:absolute;left:3402.9px;top:1770.7px;width:42.5px;height:32.2px"><svg viewBox="352 200 238 180" preserveAspectRatio="none"><path d="M352 322 A119 122 0 0 1 590 322 Q590 362 572 380 H370 Q352 362 352 322 Z" fill="#0568b8"/><circle cx="412" cy="266" r="12" fill="#fff"/><circle cx="529" cy="266" r="12" fill="#fff"/><circle cx="389" cy="327" r="12" fill="#fff"/><circle cx="553" cy="327" r="12" fill="#fff"/><circle cx="466" cy="238" r="10" fill="#fff"/><path d="M468 340 L497 243" stroke="#fff" stroke-width="15" stroke-linecap="round"/><circle cx="468" cy="341" r="18" fill="#fff"/></svg></div>
<div class="t" style="left:3476.0px;top:1771.4px;font-size:34.5px;color:#0568b8;transform:scaleX(0.9019);transform-origin:0 0;-webkit-text-stroke:0.9px #0568b8;">EHR</div>
<div style="position:absolute;left:3603.9px;top:1768px;width:28.4px;height:37.5px"><svg viewBox="1620 238 528 697" preserveAspectRatio="none"><path d="M1650 238 H1925 V420 Q1925 460 1965 460 H2148 V905 Q2148 935 2118 935 H1650 Q1620 935 1620 905 V268 Q1620 238 1650 238 Z" fill="#e8861c"/><path d="M1970 238 H1990 L2148 395 V412 H1970 Z" fill="#e8861c"/><rect x="1715" y="335" width="127" height="36" fill="#fff"/><rect x="1715" y="420" width="127" height="38" fill="#fff"/><rect x="1715" y="545" width="345" height="173" rx="8" fill="#fff"/><rect x="1755" y="588" width="265" height="90" fill="#e8861c"/><rect x="1930" y="810" width="130" height="40" fill="#fff"/></svg></div>
<div class="t" style="left:3662.3px;top:1771.4px;font-size:34.5px;color:#e8861c;letter-spacing:-0.38px;-webkit-text-stroke:0.9px #e8861c;">PMS</div>
<div class="t" style="left:3091.4px;top:1678.0px;font-size:48.5px;color:rgba(0,0,0,.27);letter-spacing:0.39px;">Activate Windows</div>
<div class="t" style="left:3091.4px;top:1741.3px;font-size:35.5px;color:rgba(0,0,0,.27);transform:scaleX(1.0422);transform-origin:0 0;">Go to Settings to activate Windows.</div>
</div></body></html>
